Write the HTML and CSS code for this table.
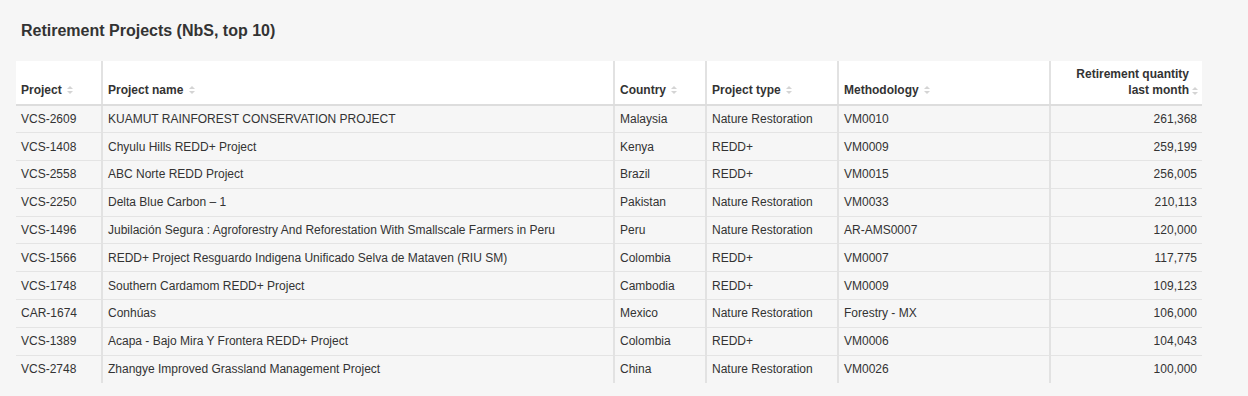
FILE: index.html
```html
<!DOCTYPE html>
<html lang="en">
<head>
    <meta charset="UTF-8">
    <title>Retirement Projects</title>
    <link rel="stylesheet" href="styles.css">
</head>
<body>
    <div class="panel">
        <h2 class="panel-title">Retirement Projects (NbS, top 10)</h2>
        <table class="data-table">
            <colgroup>
                <col class="col-id">
                <col class="col-name">
                <col class="col-country">
                <col class="col-type">
                <col class="col-method">
                <col class="col-qty">
            </colgroup>
            <thead>
                <tr>
                    <th>Project <span class="sort"></span></th>
                    <th>Project name <span class="sort"></span></th>
                    <th>Country <span class="sort"></span></th>
                    <th>Project type <span class="sort"></span></th>
                    <th>Methodology <span class="sort"></span></th>
                    <th class="num">
                        <span class="th-inner"><span>Retirement quantity<br>last month</span><span class="sort"></span></span>
                    </th>
                </tr>
            </thead>
            <tbody>
                <tr><td>VCS-2609</td><td>KUAMUT RAINFOREST CONSERVATION PROJECT</td><td>Malaysia</td><td>Nature Restoration</td><td>VM0010</td><td class="num">261,368</td></tr>
                <tr><td>VCS-1408</td><td>Chyulu Hills REDD+ Project</td><td>Kenya</td><td>REDD+</td><td>VM0009</td><td class="num">259,199</td></tr>
                <tr><td>VCS-2558</td><td>ABC Norte REDD Project</td><td>Brazil</td><td>REDD+</td><td>VM0015</td><td class="num">256,005</td></tr>
                <tr><td>VCS-2250</td><td>Delta Blue Carbon – 1</td><td>Pakistan</td><td>Nature Restoration</td><td>VM0033</td><td class="num">210,113</td></tr>
                <tr><td>VCS-1496</td><td>Jubilación Segura : Agroforestry And Reforestation With Smallscale Farmers in Peru</td><td>Peru</td><td>Nature Restoration</td><td>AR-AMS0007</td><td class="num">120,000</td></tr>
                <tr><td>VCS-1566</td><td>REDD+ Project Resguardo Indigena Unificado Selva de Mataven (RIU SM)</td><td>Colombia</td><td>REDD+</td><td>VM0007</td><td class="num">117,775</td></tr>
                <tr><td>VCS-1748</td><td>Southern Cardamom REDD+ Project</td><td>Cambodia</td><td>REDD+</td><td>VM0009</td><td class="num">109,123</td></tr>
                <tr><td>CAR-1674</td><td>Conhúas</td><td>Mexico</td><td>Nature Restoration</td><td>Forestry - MX</td><td class="num">106,000</td></tr>
                <tr><td>VCS-1389</td><td>Acapa - Bajo Mira Y Frontera REDD+ Project</td><td>Colombia</td><td>REDD+</td><td>VM0006</td><td class="num">104,043</td></tr>
                <tr><td>VCS-2748</td><td>Zhangye Improved Grassland Management Project</td><td>China</td><td>Nature Restoration</td><td>VM0026</td><td class="num">100,000</td></tr>
            </tbody>
        </table>
    </div>
</body>
</html>
```

FILE: styles.css
```css
* {
    margin: 0;
    padding: 0;
    box-sizing: border-box;
}

html, body {
    height: 100%;
    width: 100%;
    overflow: hidden;
}

body {
    font-family: 'Liberation Sans', Arial, sans-serif;
    background-color: #f6f6f6;
    color: #333333;
}

.panel {
    padding: 22px 16px 0 16px;
}

.panel-title {
    font-size: 16px;
    font-weight: bold;
    color: #333333;
    line-height: 18px;
    padding-left: 5px;
    margin-bottom: 21px;
}

.data-table {
    border-collapse: collapse;
    table-layout: fixed;
    width: 1186px;
    font-size: 12px;
}

.col-id { width: 86px; }
.col-name { width: 512px; }
.col-country { width: 92px; }
.col-type { width: 132px; }
.col-method { width: 212px; }
.col-qty { width: 152px; }

.data-table th,
.data-table td {
    text-align: left;
    white-space: nowrap;
    overflow: hidden;
    border-left: 2px solid #e2e2e2;
}

.data-table th:first-child,
.data-table td:first-child {
    border-left: none;
}

.data-table th {
    background-color: #ffffff;
    font-weight: bold;
    vertical-align: bottom;
    height: 44px;
    line-height: 16px;
    padding: 0 6px 6px 5px;
    border-bottom: 2px solid #dddddd;
}

.data-table td {
    height: 27.8px;
    padding: 0 5px 0 5px;
    border-bottom: 1px solid #e4e4e4;
    vertical-align: middle;
}

.data-table tbody tr:last-child td {
    border-bottom: none;
}

.data-table .num {
    text-align: right;
}

.data-table th.num {
    padding-right: 4px;
}

.th-inner {
    display: flex;
    justify-content: flex-end;
    align-items: flex-end;
    gap: 3px;
}

.th-inner .sort {
    margin-left: 0;
    margin-bottom: 2px;
}

.sort {
    display: inline-block;
    position: relative;
    width: 6px;
    height: 9px;
    margin-left: 2px;
    vertical-align: -1px;
}

.sort::before,
.sort::after {
    content: '';
    position: absolute;
    left: 0;
    border-left: 3px solid transparent;
    border-right: 3px solid transparent;
}

.sort::before {
    top: 0;
    border-bottom: 3px solid #d4d4d4;
}

.sort::after {
    bottom: 1px;
    border-top: 3px solid #d4d4d4;
}
```
